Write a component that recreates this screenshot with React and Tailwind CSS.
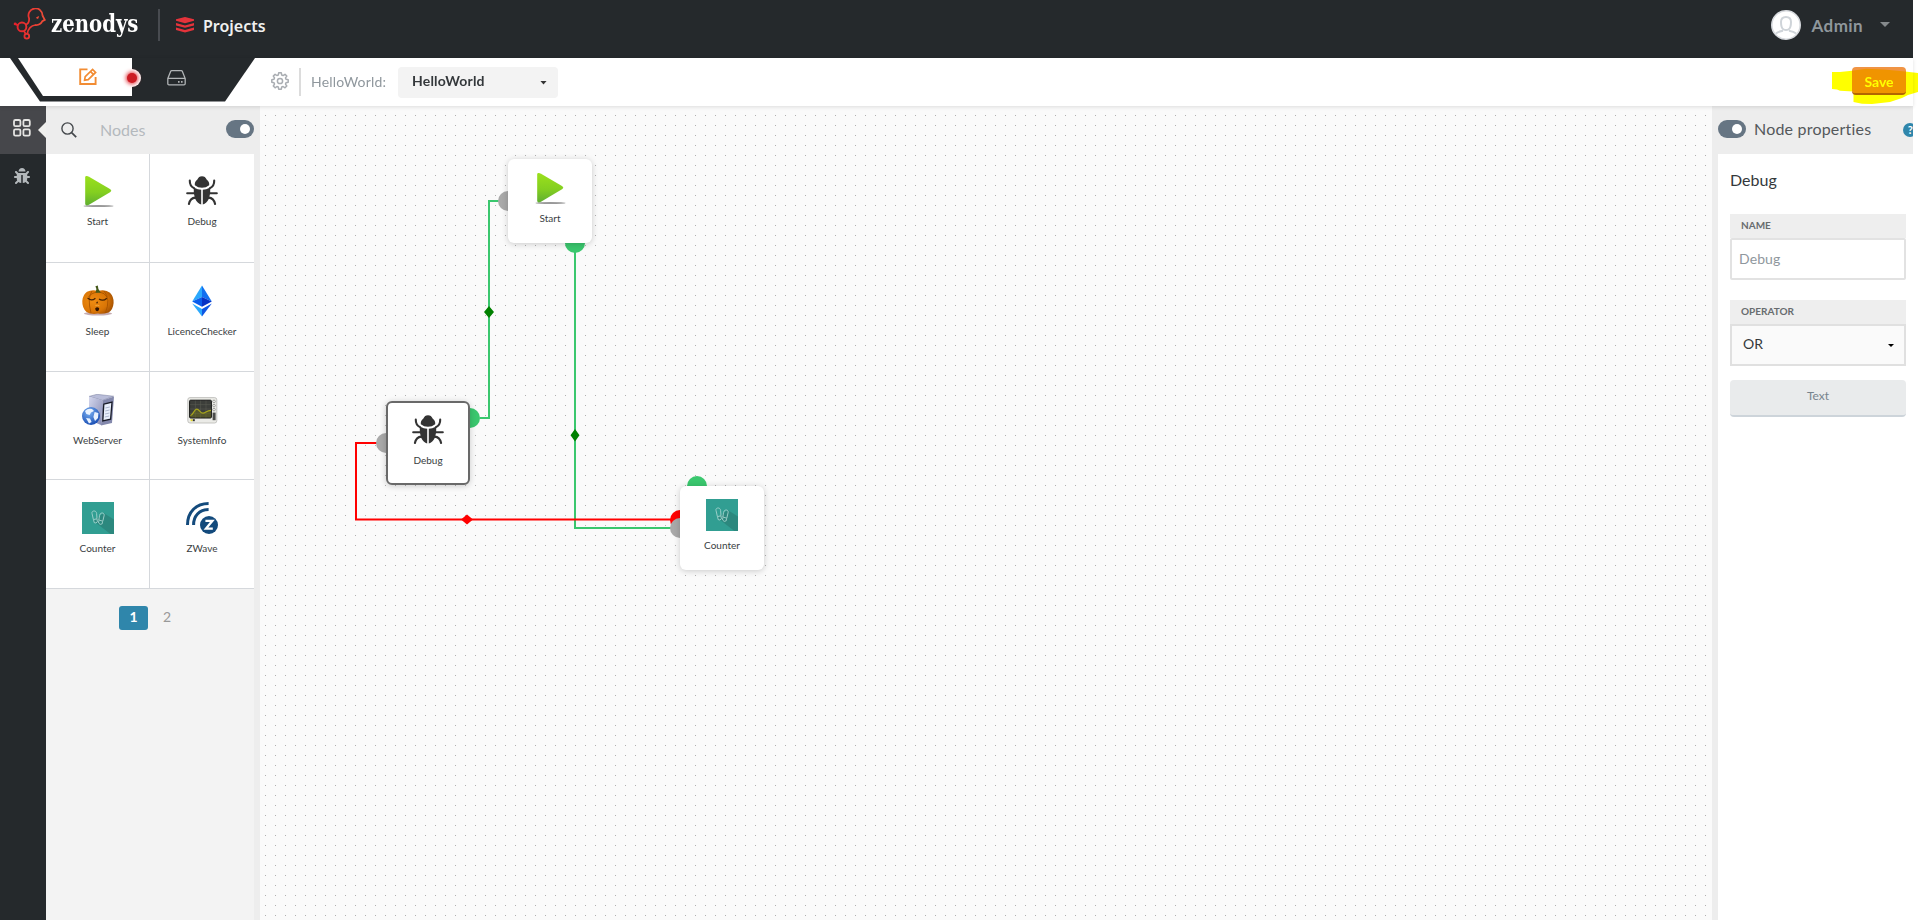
import React from "react";
import { FaBug } from "react-icons/fa";

function BirdLogo() {
  return (
    <svg width="38" height="34" viewBox="0 0 38 34" fill="none" strokeWidth="2">
      <defs>
        <linearGradient id="bird" gradientUnits="userSpaceOnUse" x1="2" y1="0" x2="36" y2="0">
          <stop offset="0" stopColor="#e3202b" />
          <stop offset="1" stopColor="#f04e38" />
        </linearGradient>
      </defs>
      <g stroke="url(#bird)">
        <path d="M33.6 6.4A8 8 0 1 0 18.3 9.4C18.6 13.4 17.6 15.4 14.6 16.6" />
        <path d="M33.4 6L36.2 11.2L33.4 12.6A8 8 0 0 1 25.6 17C20.6 17.6 17.4 20.4 16.2 27" />
        <circle cx="10.2" cy="19.2" r="5" strokeWidth="2.2" />
        <path d="M12.4 23.6L14.4 27.2M3 16L5.6 17.4" />
        <circle cx="15.7" cy="29.7" r="2.7" />
      </g>
      <circle cx="2.4" cy="15.8" r="1.6" fill="#e5202b" />
      <path d="M26.4 8.2l3.4-1.4-1 2.8c-1 .8-2.2.2-2.4-1.4z" fill="#ee4a37" />
    </svg>
  );
}

function Stack() {
  return (
    <svg width="18" height="16" viewBox="0 0 18 16" fill="#e5333b">
      <path d="M9 0L18 2.2V3.8L9 6.2L0 3.8V2.2Z" />
      <path d="M0 6L9 8.4L18 6V8.4L9 10.8L0 8.4Z" />
      <path d="M0 10.6L9 13L18 10.6V13L9 15.5L0 13Z" />
    </svg>
  );
}

function EditIcon() {
  return (
    <svg width="18" height="18" viewBox="0 0 18 18" fill="none" stroke="#f28c33" strokeWidth="1.9">
      <path d="M8.5 1.4H1.2V16H16.6V9" />
      <path d="M5.6 12.2L6.2 8.6L13.6 1.4L16.6 4.4L9.2 11.6ZM11.6 3.6L14.4 6.4" strokeWidth="1.7" />
    </svg>
  );
}

function DriveIcon() {
  return (
    <svg width="19" height="16" viewBox="0 0 19 16" fill="none" stroke="#b0b3b5" strokeWidth="1.3">
      <path d="M.8 8.6L3.6 1.4Q3.9.7 4.7.7H14.3Q15.1.7 15.4 1.4L18.2 8.6V13.6Q18.2 14.8 17 14.8H2Q.8 14.8 .8 13.6ZM.8 8.4H18.2" />
      <path d="M11 11.8h1.6M14 11.8h1.6" strokeWidth="1.7" />
    </svg>
  );
}

function GearIcon() {
  return (
    <svg width="18" height="18" viewBox="0 0 18 18" fill="none" stroke="#a9adb2" strokeWidth="1.5" strokeLinejoin="round">
      <circle cx="9" cy="9" r="2.6" />
      <path d="M7.7 .8H10.3L10.7 3L12.1 3.6L14 2.3L15.8 4.1L14.5 5.9L15 7.3L17.2 7.7V10.3L15 10.7L14.5 12.1L15.8 14L14 15.8L12.1 14.5L10.7 15L10.3 17.2H7.7L7.3 15L5.9 14.5L4.1 15.8L2.3 14L3.5 12.1L3 10.7L.8 10.3V7.7L3 7.3L3.5 5.9L2.3 4.1L4.1 2.3L5.9 3.5L7.3 3Z" />
    </svg>
  );
}

function GridIcon() {
  return (
    <svg width="18" height="18" viewBox="0 0 18 18" fill="none" stroke="#e4e4e2" strokeWidth="1.8">
      <rect x="1" y="1" width="6.4" height="6.2" rx="1.4" />
      <rect x="10.4" y="1" width="6.4" height="6.2" rx="1.4" />
      <rect x="1" y="10.4" width="6.4" height="6.2" rx="1.4" />
      <rect x="10.4" y="10.4" width="6.4" height="6.2" rx="1.4" />
    </svg>
  );
}

function SearchIcon() {
  return (
    <svg width="16" height="16" viewBox="0 0 16 16" fill="none" stroke="#44484c" strokeWidth="1.4">
      <circle cx="6.5" cy="6.5" r="5.6" />
      <path d="M10.6 10.6L15.2 15.2" strokeWidth="1.7" />
    </svg>
  );
}

function Toggle() {
  return (
    <span className="flex h-[18px] w-7 shrink-0 items-center justify-end rounded-full bg-[#667583] pr-1">
      <span className="size-[10px] rounded-full bg-white" />
    </span>
  );
}

function PlayIcon() {
  return (
    <svg width="32" height="32" viewBox="0 0 32 32">
      <defs>
        <linearGradient id="play" x1="0" y1="0" x2="0" y2="1">
          <stop offset="0" stopColor="#9be01c" />
          <stop offset=".55" stopColor="#84cf20" />
          <stop offset="1" stopColor="#5fae31" />
        </linearGradient>
      </defs>
      <ellipse cx="16.5" cy="31" rx="15" ry="1" fill="#999" />
      <path d="M3.2 2.4Q3.2 .6 5 1L7 1.8L28.4 14.2Q30.2 15.6 28.4 17L7 29.8Q3.2 31.6 3.2 28.6Z" fill="url(#play)" />
    </svg>
  );
}

function BeetleIcon() {
  return (
    <svg width="32" height="32" viewBox="0 0 32 32" fill="none" stroke="#333" strokeWidth="2.1" strokeLinecap="round">
      <path d="M11.4 4.6Q12.6 1.2 16 1.2T20.6 4.6Q23.6 7 23.2 10.2Q20 12.8 16 12.8T8.8 10.2Q8.4 7 11.4 4.6Z" fill="#333" stroke="none" />
      <path d="M7.8 12.6Q12 14.8 15.2 14.8V29.4Q11.4 28.6 9 23.6Q7.2 18 7.8 12.6ZM24.2 12.6Q20 14.8 16.8 14.8V29.4Q20.6 28.6 23 23.6Q24.8 18 24.2 12.6Z" fill="#333" stroke="none" />
      <path d="M3.8 5.6Q3.6 10.8 8 13.2M28.2 5.6Q28.4 10.8 24 13.2M1.2 18.2H8.6M30.8 18.2H23.4M9.4 22.6Q4.2 23 2.9 29M22.6 22.6Q27.8 23 29.1 29" />
    </svg>
  );
}

function PumpkinIcon() {
  return (
    <svg width="32" height="32" viewBox="0 0 32 32" fill="none">
      <defs>
        <radialGradient id="pumpkin" cx=".35" cy=".45" r=".75">
          <stop offset="0" stopColor="#f08d12" />
          <stop offset=".6" stopColor="#d97506" />
          <stop offset="1" stopColor="#944600" />
        </radialGradient>
      </defs>
      <ellipse cx="16" cy="28.6" rx="14" ry="2" fill="#8c5b68" opacity=".5" />
      <path d="M5 6.8Q10 4 16 6Q23 3.6 28 7.8Q32 12 31.6 18Q31 25 26.6 27.4Q21 29.4 16 28.6Q9 29.8 4.6 27Q0 23 .3 16Q.8 9.6 5 6.8Z" fill="url(#pumpkin)" />
      <path d="M10 6Q5 13 9 28M22 6Q29 14 23.4 28M16 6.8Q9 8 6.5 12M17 6.8Q23 8 25 12" stroke="#a95400" strokeWidth=".9" />
      <path d="M13.4 1.2L15.8 .6L16.4 4L18.8 7.8H13.6L14.4 4Z" fill="#45591b" />
      <path d="M5.6 13Q9.5 16.8 13.4 13.2M17 14Q21 16.8 24.8 13.2" stroke="#452204" strokeWidth="1.2" />
      <path d="M14 18.2l1.2-2 .9 2zM13.2 23.2q2-2 4 0q-.2 3-2 3t-2-3z" fill="#351600" />
      <path d="M13.4 20.6q2-.8 4 .2" stroke="#f8b84c" strokeWidth=".7" />
    </svg>
  );
}

function EthIcon() {
  return (
    <svg width="32" height="32" viewBox="0 0 32 32">
      <path d="M16 .4L6.2 16.4L16 12Z" fill="#2ba8fc" />
      <path d="M16 .4L25.8 16.4L16 12Z" fill="#126ff0" />
      <path d="M6.2 16.4L16 12V21.8Z" fill="#0a5cec" />
      <path d="M25.8 16.4L16 12V21.8Z" fill="#0832c4" />
      <path d="M6.2 18.4L16 24V31.4Z" fill="#2ba8fc" />
      <path d="M25.8 18.4L16 24V31.4Z" fill="#0e56e4" />
    </svg>
  );
}

function ServerIcon() {
  return (
    <svg width="32" height="32" viewBox="0 0 32 32">
      <defs>
        <linearGradient id="case" x1="0" y1="0" x2="1" y2="1">
          <stop offset="0" stopColor="#d5d8ee" />
          <stop offset="1" stopColor="#8388b2" />
        </linearGradient>
        <radialGradient id="globe" cx=".4" cy=".3" r=".7">
          <stop offset="0" stopColor="#7bb1f2" />
          <stop offset="1" stopColor="#1b50b5" />
        </radialGradient>
      </defs>
      <path d="M7 2.4L15 .3L31.5 2.2L20.5 6.4Z" fill="#b9bdd9" stroke="#777d9c" strokeWidth=".5" />
      <path d="M7 2.4L20.5 6.4L19 31L7 26Z" fill="url(#case)" />
      <path d="M20.5 6.4L32 2.4L30 29L19 31.6Z" fill="#8388ac" />
      <path d="M21.8 10.2L30 8.2L28.6 25.2L20.8 27Z" fill="#e9effc" stroke="#191c28" strokeWidth="1.3" />
      <path d="M23.4 14l4.4-1M23.2 17l4.4-1M23 20l4.4-1M22.8 23l4.4-1" stroke="#9da7c1" strokeWidth=".8" />
      <circle cx="9" cy="22" r="9" fill="url(#globe)" />
      <path d="M3 17Q6 14 10 15L12 17L9 18.6L7.6 21L4.4 20ZM12.6 18L16.4 19L16 24L13 27L11.4 23ZM4 24L8 24.6L9.6 28L7 29.6Z" fill="#eaf3ff" />
    </svg>
  );
}

function ScopeIcon() {
  return (
    <svg width="32" height="32" viewBox="0 0 32 32" fill="none">
      <rect x="1.8" y="3.6" width="29" height="25.4" rx="2.2" fill="#ebebe7" stroke="#b8b8b4" strokeWidth=".8" />
      <rect x="3.6" y="6.2" width="21.8" height="17.8" rx="1" fill="#3c3e3a" stroke="#161716" />
      <path d="M4 10.6H25M4 15H25M4 19.4H25M9.4 6.6V23.6M14.6 6.6V23.6M20 6.6V23.6" stroke="#5c5e56" strokeWidth=".5" />
      <path d="M4.4 21.6C7 21.6 8 15.4 10.6 15.2S14.2 19.4 17 19.2S20.4 16.4 25 16.4V23.4H4.4Z" fill="#74741a" opacity=".45" />
      <path d="M4.4 21.6C7 21.6 8 15.4 10.6 15.2S14.2 19.4 17 19.2S20.4 16.4 25 16.4" stroke="#a7a51a" strokeWidth="1.2" />
      <g fill="#f4f4f2" stroke="#858581" strokeWidth=".7">
        <circle cx="28" cy="7.4" r="1.3" />
        <circle cx="28" cy="11.6" r="1.3" />
        <circle cx="28" cy="15.6" r="1.3" />
      </g>
      <rect x="26.6" y="18.6" width="3" height="7.6" fill="#4b4c4a" />
      <rect x="4.6" y="25.2" width="2" height="2" fill="#e3d824" />
      <rect x="6.8" y="25.2" width="2" height="2" fill="#333" />
    </svg>
  );
}

function CounterIcon() {
  return (
    <svg width="32" height="32" viewBox="0 0 32 32" fill="none">
      <path d="M0 0H32V32H0Z" fill="#319e92" />
      <path d="M21.6 11L32 17.6V32H28.4L11.6 19Z" fill="#2c887e" />
      <g stroke="#a5d4ce" strokeWidth=".9">
        <path d="M10 11.4C9.2 8.6 14.2 7.8 14.6 11.4L15 16.8L11.4 17.6ZM11.6 17.8L12.2 20.6Q14 21.8 15.4 19.8L15 17" />
        <path d="M22.2 13.2C22.4 10.2 18 10.2 17.6 13.4L16.8 18L20.8 19.2ZM16.8 18.4L16.6 21Q18 23.4 20.2 21.8L20.6 19.4" />
      </g>
    </svg>
  );
}

function ZWaveIcon() {
  return (
    <svg width="32" height="32" viewBox="0 0 32 32" fill="none" stroke="#134a7c" strokeWidth="3">
      <path d="M1.5 23C1.5 9.6 10.4 1.6 22.6 1.5" />
      <path d="M7.6 23C7.4 14.2 13.2 7.6 22.6 7.5" />
      <circle cx="23" cy="23" r="9" fill="#134a7c" stroke="none" />
      <path d="M19.4 18.8H26.4L20 26.6H26.8" stroke="#fff" strokeWidth="2.3" />
    </svg>
  );
}

const palette = [
  ["Start", PlayIcon],
  ["Debug", BeetleIcon],
  ["Sleep", PumpkinIcon],
  ["LicenceChecker", EthIcon],
  ["WebServer", ServerIcon],
  ["SystemInfo", ScopeIcon],
  ["Counter", CounterIcon],
  ["ZWave", ZWaveIcon],
];

function Header() {
  return (
    <header className="flex h-[58px] w-[1913px] items-start bg-[#25292c]">
      <div className="flex w-[158px] pt-2 pl-[13px]">
        <BirdLogo />
        <span className="mt-[1px] ml-[5px] origin-left scale-x-[0.82] font-['DejaVu_Serif'] text-[24px] leading-[29px] font-bold text-white">
          zenodys
        </span>
      </div>
      <div className="mt-[9px] h-8 w-[2px] bg-[#484b50]" />
      <div className="mt-[17px] ml-4">
        <Stack />
      </div>
      <span className="mt-[14px] ml-[9px] font-['Noto_Sans'] text-[16px] leading-6 font-semibold text-[#f0f0f0]">Projects</span>
      <div className="mt-[10px] mr-[23px] ml-auto flex items-center">
        <svg width="30" height="30" viewBox="0 0 30 30" fill="none">
          <circle cx="15" cy="15" r="14.2" fill="#fff" stroke="#d7dade" strokeWidth="1.6" />
          <path d="M10 12Q10 7 15 7T20 12Q20 18 17.6 19.4Q15 20.8 12.4 19.4Q10 18 10 12ZM5 23.4Q7 21.6 12 20.8M25 23.4Q23 21.6 18 20.8" stroke="#cfd4d9" strokeWidth="2" />
        </svg>
        <span className="mt-[2px] ml-[11px] text-[17px] leading-6 font-bold tracking-[0.4px] text-[#8f979c]">Admin</span>
        <span className="mt-[-1px] ml-[17px] h-[5px] w-[10px] bg-[#85898c] [clip-path:polygon(0_0,100%_0,50%_100%)]" />
      </div>
    </header>
  );
}

function Toolbar() {
  return (
    <div className="relative z-10 flex h-12 w-[1913px] bg-white shadow-[0_1px_4px_rgba(0,0,0,0.12)]">
      <div className="relative ml-[10px] h-[43.5px] w-[245px]">
        <div className="flex h-full bg-[#25292c] pl-2 [clip-path:polygon(0_0,100%_0,215px_100%,30px_100%)]">
          <div className="h-[38px] w-[114px] bg-white pt-[10px] pl-[61px] [clip-path:polygon(0_0,100%_0,100%_100%,25px_100%)]">
            <EditIcon />
          </div>
          <div className="pt-3 pl-[35px]">
            <DriveIcon />
          </div>
        </div>
        <span className="absolute top-[11px] left-[113px] flex size-[18px] items-center justify-center rounded-full bg-white">
          <span className="size-[10px] rounded-full bg-[#cc1c24] shadow-[0_0_4px_1px_#e02830]" />
        </span>
      </div>
      <div className="mt-[14px] ml-4">
        <GearIcon />
      </div>
      <div className="mt-[10px] ml-[10px] h-7 w-[2px] bg-[#dcdcdc]" />
      <span className="mt-[13px] ml-[10px] w-[87px] text-[14px] leading-[22px] tracking-[0.2px] text-[#8f979d]">HelloWorld:</span>
      <div className="mt-[9px] flex h-[31px] w-40 items-center justify-between rounded-[4px] bg-[#f3f3f3] pr-[11px] pl-[14px]">
        <span className="-mt-1 text-[14px] leading-[22px] font-bold tracking-[0.2px] text-[#34383b]">HelloWorld</span>
        <span className="h-1 w-[7px] bg-[#333] [clip-path:polygon(0_0,100%_0,50%_100%)]" />
      </div>
      <div className="mt-[9px] mr-[7px] ml-auto flex h-7 w-[54px] items-center justify-center rounded-[4px] border-b-2 border-[#b36518] bg-[#f09444] pt-[2px] text-[14px] font-bold text-white">
        Save
      </div>
      <svg className="absolute top-3 left-[1832px] overflow-visible mix-blend-multiply" width="86" height="34" viewBox="0 0 86 34">
        <path d="M0 2H8L20 .8L34 -1.2L52 -.6L73 1.6L86 3V22L76 25L70 28L58 32L40 34L30 33.8L21.5 32V21.4L8 20.8L5 19.4L0 19Z" fill="#ff0" />
      </svg>
    </div>
  );
}

function Rail() {
  return (
    <nav className="flex w-[46px] shrink-0 flex-col items-center bg-[#25292c]">
      <div className="relative flex h-12 w-full justify-center bg-[#46474b] pt-[13px] pr-[2px]">
        <GridIcon />
        <span className="absolute top-4 right-0 h-4 w-2 bg-[#efefed] [clip-path:polygon(100%_0,100%_100%,0_50%)]" />
      </div>
      <FaBug className="mt-[14px] mr-[2px] size-4 text-[#b3b8bb]" />
    </nav>
  );
}

function NodesPanel() {
  return (
    <aside className="flex w-[208px] shrink-0 flex-col bg-[#f3f3f3]">
      <div className="flex h-12 shrink-0 items-center bg-[#ededed] pl-[15px]">
        <SearchIcon />
        <span className="ml-[23px] text-[16px] text-[#b4b9bd]">Nodes</span>
        <span className="-mt-[2px] ml-auto">
          <Toggle />
        </span>
      </div>
      <div className="grid h-[435px] shrink-0 grid-cols-[104px_104px] grid-rows-4 bg-white">
        {palette.map(([name, Icon]) => (
          <div key={name} className="flex flex-col items-center border-b border-[#d5d8dc] pt-[22px] odd:border-r nth-[-n+2]:pt-[21px]">
            <Icon />
            <span className="mt-[6px] text-[10px] leading-4 text-[#3a3e42]">{name}</span>
          </div>
        ))}
      </div>
      <div className="flex items-center pt-[17px] pl-[73px]">
        <span className="flex h-6 w-[29px] items-center justify-center rounded-[3px] bg-[#2f86ab] pb-[3px] text-[14px] font-bold text-white">1</span>
        <span className="-mt-[3px] ml-[15px] text-[14px] text-[#999]">2</span>
      </div>
    </aside>
  );
}

function NodeCard({ name, Icon, place }) {
  return (
    <div className={"absolute flex size-[84px] flex-col items-center rounded-[6px] bg-white shadow-[0_1px_6px_rgba(0,0,0,0.2)] " + place}>
      <Icon />
      <span className="mt-[6px] text-[10px] leading-4 text-[#3a3e42]">{name}</span>
    </div>
  );
}

function Canvas() {
  return (
    <main className="relative w-[1452px] shrink-0 overflow-hidden bg-[#fafafa]">
      <svg className="absolute inset-0" width="1452" height="814" viewBox="260 106 1452 814" fill="none">
        <defs>
          <pattern id="dots" x="265" y="115" width="10" height="10" patternUnits="userSpaceOnUse">
            <rect width="1" height="1" fill="#b0b0b0" />
          </pattern>
        </defs>
        <rect x="260" y="106" width="1452" height="814" fill="url(#dots)" />
        <g stroke="#3ac76e" strokeWidth="2">
          <path d="M500 201H489V418H480" />
          <path d="M575 250V528H672" />
        </g>
        <path d="M378 443H356V519.5H672" stroke="#f00" strokeWidth="2" />
        <path d="M489 306L494 312L489 318L484 312ZM575 429L579.5 435.3L575 441.6L570.5 435.3Z" fill="#008000" />
        <path d="M461 519.5L467 514.5L473 519.5L467 524.5Z" fill="#f00" />
        <circle cx="508" cy="201" r="10" fill="#a9a9a9" />
        <circle cx="575" cy="243" r="10" fill="#3ac76e" />
        <circle cx="470" cy="418" r="10" fill="#3ac76e" />
        <circle cx="386" cy="443" r="10" fill="#a9a9a9" />
        <circle cx="697" cy="486" r="10" fill="#3ac76e" />
        <circle cx="680" cy="520" r="10" fill="#f00" />
        <circle cx="680" cy="528" r="10" fill="#a9a9a9" />
      </svg>
      <NodeCard name="Start" Icon={PlayIcon} place="top-[53px] left-[248px] pt-[13px]" />
      <NodeCard name="Debug" Icon={BeetleIcon} place="top-[295px] left-[126px] border-2 border-[#696969] pt-[11px]" />
      <NodeCard name="Counter" Icon={CounterIcon} place="top-[380px] left-[420px] pt-[13px]" />
    </main>
  );
}

function Properties() {
  return (
    <aside className="flex w-[195px] shrink-0 flex-col overflow-hidden bg-white">
      <div className="flex h-12 shrink-0 items-center bg-[#ededed]">
        <span className="-mt-[2px]">
          <Toggle />
        </span>
        <span className="-mt-[2px] ml-2 text-[16px] tracking-[0.2px] whitespace-nowrap text-[#54585b]">Node properties</span>
        <span className="ml-8 flex size-[14px] shrink-0 items-center justify-center rounded-full bg-[#2f86ab] text-[11px] font-bold text-white">?</span>
      </div>
      <div className="flex flex-col pr-[7px] pl-3">
        <h2 className="mt-[14px] text-[16px] leading-6 text-[#34383b]">Debug</h2>
        <label className="mt-[22px] h-6 bg-[#eee] pl-[11px] text-[10px] leading-[23px] font-bold text-[#686c6f]">NAME</label>
        <div className="flex h-[42px] items-center rounded-[2px] border-2 border-[#e2e2e2] pb-[2px] pl-[7px] text-[14px] tracking-[0.1px] text-[#8f979d]">Debug</div>
        <label className="mt-5 h-6 bg-[#eee] pl-[11px] text-[10px] leading-[23px] font-bold text-[#686c6f]">OPERATOR</label>
        <div className="flex h-[42px] items-center justify-between border-2 border-[#e0e0e0] bg-[#fafafa] pr-[10px] pb-[3px] pl-[11px] text-[14px] text-[#34383b]">
          OR
          <span className="mt-1 h-[3px] w-[6px] bg-black [clip-path:polygon(0_0,100%_0,50%_100%)]" />
        </div>
        <div className="mt-[14px] flex h-[37px] items-center justify-center rounded-[4px] border-b-2 border-[#cdd4da] bg-[#e9ebec] pb-[4px] text-[12px] text-[#77838d]">
          Text
        </div>
      </div>
    </aside>
  );
}

export default function App() {
  return (
    <div className="flex h-[920px] w-[1918px] flex-col overflow-hidden bg-white font-['Lato',sans-serif]">
      <Header />
      <Toolbar />
      <div className="flex h-[814px]">
        <Rail />
        <NodesPanel />
        <div className="w-[6px] shrink-0 bg-[#ededed]" />
        <Canvas />
        <div className="w-[6px] shrink-0 bg-[#ededed]" />
        <Properties />
      </div>
    </div>
  );
}
